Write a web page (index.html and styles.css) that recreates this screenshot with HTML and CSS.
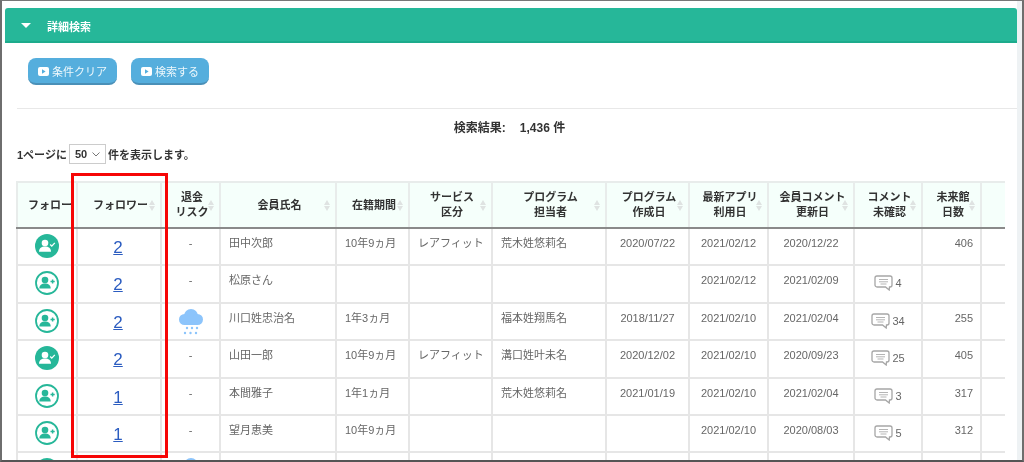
FILE: index.html
```html
<!DOCTYPE html>
<html lang="ja">
<head>
<meta charset="utf-8">
<title>詳細検索</title>
<link rel="stylesheet" href="styles.css">
</head>
<body>
<svg class="defs" width="0" height="0" aria-hidden="true">
  <symbol id="i-followed" viewBox="0 0 24 24">
    <circle cx="12" cy="12" r="12" fill="#26b799"/>
    <circle cx="10" cy="9" r="3.300" fill="#fff"/>
    <path d="M4 17.800c0-3.500 2.500-5.300 6-5.300s6 1.800 6 5.300z" fill="#fff"/>
    <path d="M15.200 10.500l1.600 1.600 3-3.200" fill="none" stroke="#fff" stroke-width="1.300"/>
  </symbol>
  <symbol id="i-follow" viewBox="0 0 24 24">
    <circle cx="12" cy="12" r="11" fill="#fff" stroke="#26b799" stroke-width="1.800"/>
    <circle cx="10" cy="9" r="3.300" fill="#26b799"/>
    <path d="M4.300 17.500c0-3.300 2.400-5 5.700-5s5.700 1.700 5.700 5z" fill="#26b799"/>
    <path d="M15.500 10.500h4.200M17.600 8.400v4.200" fill="none" stroke="#26b799" stroke-width="1.500"/>
  </symbol>
  <symbol id="i-cloud" viewBox="0 0 26 26">
    <g fill="#8cc4fb">
      <circle cx="13" cy="7" r="7"/>
      <circle cx="6.500" cy="10.500" r="5.500"/>
      <circle cx="19.500" cy="10.500" r="5.500"/>
      <rect x="6.500" y="8" width="13" height="8"/>
      <circle cx="9" cy="19" r="1.200"/><circle cx="14" cy="19" r="1.200"/><circle cx="19" cy="19" r="1.200"/>
      <circle cx="7" cy="24" r="1.200"/><circle cx="12.500" cy="24" r="1.200"/><circle cx="18" cy="24" r="1.200"/>
    </g>
  </symbol>
  <symbol id="i-comment" viewBox="0 0 19 16">
    <path d="M3 1h13a2 2 0 0 1 2 2v7a2 2 0 0 1-2 2h-.5l-.3 3-3.700-3H3a2 2 0 0 1-2-2V3a2 2 0 0 1 2-2z" fill="none" stroke="#a6a6a6" stroke-width="1.300"/>
    <path d="M5 4.500h9M5 6.800h9M6.500 9h6" stroke="#b5b5b5" stroke-width="1"/>
  </symbol>
  <symbol id="i-play" viewBox="0 0 11 9">
    <rect width="11" height="9" rx="2" fill="#fff"/>
    <path d="M4 2.200v4.600l3.600-2.300z" fill="#55aedd"/>
  </symbol>
</svg>

<div class="frame">
  <main class="content">
    <section class="panel">
      <span class="caret"></span>
      <h2 class="panel-title">詳細検索</h2>
    </section>

    <div class="actions">
      <button class="btn" type="button"><svg class="btn-icon"><use href="#i-play"/></svg>条件クリア</button>
      <button class="btn" type="button"><svg class="btn-icon"><use href="#i-play"/></svg>検索する</button>
    </div>

    <hr class="rule">

    <p class="result">検索結果:<span class="result-num">1,436 件</span></p>

    <div class="page-size">
      <span>1ページに</span>
      <span class="select">50<svg class="chev" viewBox="0 0 8 5"><path d="M.5.500 4 4 7.500.500" fill="none" stroke="#777"/></svg></span>
      <span>件を表示します。</span>
    </div>

    <table class="grid">
      <colgroup>
        <col class="c1"><col class="c2"><col class="c3"><col class="c4"><col class="c5"><col class="c6"><col class="c7"><col class="c8"><col class="c9"><col class="c10"><col class="c11"><col class="c12"><col class="c13">
      </colgroup>
      <thead>
        <tr>
          <th class="th-first">フォロー</th>
          <th>フォロワー<i class="sort"></i></th>
          <th>退会<br>リスク<i class="sort"></i></th>
          <th>会員氏名<i class="sort"></i></th>
          <th>在籍期間<i class="sort"></i></th>
          <th>サービス<br>区分<i class="sort"></i></th>
          <th>プログラム<br>担当者<i class="sort"></i></th>
          <th>プログラム<br>作成日<i class="sort"></i></th>
          <th>最新アプリ<br>利用日<i class="sort"></i></th>
          <th>会員コメント<br>更新日<i class="sort"></i></th>
          <th>コメント<br>未確認<i class="sort"></i></th>
          <th>未来館<br>日数<i class="sort"></i></th>
          <th></th>
        </tr>
      </thead>
      <tbody>
        <tr>
          <td class="mid"><svg class="follow"><use href="#i-followed"/></svg></td>
          <td class="mid"><a class="count" href="#">2</a></td>
          <td class="ctr">-</td>
          <td>田中次郎</td><td>10年9ヵ月</td><td>レアフィット</td><td>荒木姓悠莉名</td>
          <td class="ctr">2020/07/22</td><td class="ctr">2021/02/12</td><td class="ctr">2020/12/22</td>
          <td class="mid"></td><td class="num">406</td><td></td>
        </tr>
        <tr>
          <td class="mid"><svg class="follow"><use href="#i-follow"/></svg></td>
          <td class="mid"><a class="count" href="#">2</a></td>
          <td class="ctr">-</td>
          <td>松原さん</td><td></td><td></td><td></td>
          <td class="ctr"></td><td class="ctr">2021/02/12</td><td class="ctr">2021/02/09</td>
          <td class="mid"><span class="cmt"><svg class="cmt-icon"><use href="#i-comment"/></svg>4</span></td><td class="num"></td><td></td>
        </tr>
        <tr>
          <td class="mid"><svg class="follow"><use href="#i-follow"/></svg></td>
          <td class="mid"><a class="count" href="#">2</a></td>
          <td class="mid"><svg class="cloud"><use href="#i-cloud"/></svg></td>
          <td>川口姓忠治名</td><td>1年3ヵ月</td><td></td><td>福本姓翔馬名</td>
          <td class="ctr">2018/11/27</td><td class="ctr">2021/02/10</td><td class="ctr">2021/02/04</td>
          <td class="mid"><span class="cmt"><svg class="cmt-icon"><use href="#i-comment"/></svg>34</span></td><td class="num">255</td><td></td>
        </tr>
        <tr>
          <td class="mid"><svg class="follow"><use href="#i-followed"/></svg></td>
          <td class="mid"><a class="count" href="#">2</a></td>
          <td class="ctr">-</td>
          <td>山田一郎</td><td>10年9ヵ月</td><td>レアフィット</td><td>溝口姓叶未名</td>
          <td class="ctr">2020/12/02</td><td class="ctr">2021/02/10</td><td class="ctr">2020/09/23</td>
          <td class="mid"><span class="cmt"><svg class="cmt-icon"><use href="#i-comment"/></svg>25</span></td><td class="num">405</td><td></td>
        </tr>
        <tr>
          <td class="mid"><svg class="follow"><use href="#i-follow"/></svg></td>
          <td class="mid"><a class="count" href="#">1</a></td>
          <td class="ctr">-</td>
          <td>本間雅子</td><td>1年1ヵ月</td><td></td><td>荒木姓悠莉名</td>
          <td class="ctr">2021/01/19</td><td class="ctr">2021/02/10</td><td class="ctr">2021/02/04</td>
          <td class="mid"><span class="cmt"><svg class="cmt-icon"><use href="#i-comment"/></svg>3</span></td><td class="num">317</td><td></td>
        </tr>
        <tr>
          <td class="mid"><svg class="follow"><use href="#i-follow"/></svg></td>
          <td class="mid"><a class="count" href="#">1</a></td>
          <td class="ctr">-</td>
          <td>望月恵美</td><td>10年9ヵ月</td><td></td><td></td>
          <td class="ctr"></td><td class="ctr">2021/02/10</td><td class="ctr">2020/08/03</td>
          <td class="mid"><span class="cmt"><svg class="cmt-icon"><use href="#i-comment"/></svg>5</span></td><td class="num">312</td><td></td>
        </tr>
        <tr>
          <td class="mid"><svg class="follow"><use href="#i-followed"/></svg></td>
          <td class="mid"></td>
          <td class="mid"><svg class="cloud"><use href="#i-cloud"/></svg></td>
          <td></td><td></td><td></td><td></td><td></td><td></td><td></td><td></td><td></td><td></td>
        </tr>
      </tbody>
    </table>
  </main>
  <div class="gutter"></div>
  <div class="highlight"></div>
</div>
</body>
</html>
```

FILE: styles.css
```css
* { box-sizing: border-box; }

html, body {
  margin: 0;
  background: #fff;
}

.defs { position: absolute; }

.frame {
  position: relative;
  display: flex;
  width: 1024px;
  height: 462px;
  overflow: hidden;
  border-top: 1px solid #777;
  border-left: 2px solid #6e6e6e;
  border-right: 2px solid #6e6e6e;
  border-bottom: 2px solid #555;
  background: #fff;
  color: #666;
  font-family: "Liberation Sans", "Noto Sans CJK JP", sans-serif;
  font-size: 11px;
  filter: blur(0.5px);
}

.content {
  flex: 1;
  min-width: 0;
  overflow: hidden;
}

.gutter {
  width: 5px;
  background: #eef2f4;
}

.panel {
  display: flex;
  align-items: center;
  height: 35px;
  margin: 7px 0 0 3px;
  padding: 2px 0 0 16px;
  background: #26b799;
  border-bottom: 2px solid #1cab8c;
  border-radius: 3px 3px 0 0;
}

.caret {
  width: 0;
  height: 0;
  border-style: solid;
  border-width: 5px 5px 0;
  border-color: #fff transparent transparent;
}

.panel-title {
  margin: 0 0 0 16px;
  color: #fff;
  font-size: 11px;
  font-weight: 700;
}

.actions {
  display: flex;
  gap: 14px;
  margin: 15px 0 0 26px;
}

.btn {
  display: flex;
  align-items: center;
  gap: 3px;
  height: 27px;
  padding: 0 10px;
  border: 0;
  border-bottom: 2px solid #4a90b8;
  border-radius: 8px;
  background: #55aedd;
  color: #eef8fc;
  font: inherit;
}

.btn-icon {
  width: 11px;
  height: 9px;
  margin-top: 1px;
}

.rule {
  height: 1px;
  margin: 23px 0 0 15px;
  border: 0;
  background: #e8e8e8;
}

.result {
  margin: 11px 0 0;
  color: #333;
  font-size: 12px;
  font-weight: 700;
  line-height: 16px;
  text-align: center;
}

.result-num { margin-left: 14px; }

.page-size {
  display: flex;
  align-items: center;
  gap: 2px;
  height: 20px;
  margin: 8px 0 0 15px;
  color: #333;
  font-weight: 700;
  font-size: 11px;
}

.select {
  display: flex;
  align-items: center;
  justify-content: space-between;
  width: 37px;
  height: 20px;
  padding: 0 5px;
  border: 1px solid #ccc;
  background: #fff;
}

.chev {
  width: 8px;
  height: 5px;
}

.grid {
  width: 988px;
  margin: 17px 0 0 14px;
  border-collapse: collapse;
  table-layout: fixed;
}

.c1 { width: 60px; }
.c2 { width: 84px; }
.c3 { width: 59px; }
.c4 { width: 116px; }
.c5 { width: 73px; }
.c6 { width: 83px; }
.c7 { width: 114px; }
.c8 { width: 83px; }
.c9 { width: 79px; }
.c10 { width: 86px; }
.c11 { width: 68px; }
.c12 { width: 59px; }
.c13 { width: 24px; }

.grid th {
  position: relative;
  height: 46px;
  padding: 0 0 0 3px;
  border: 2px solid #e8eceb;
  border-bottom: 2px solid #8a8a8a;
  background: #f5fffb;
  color: #333;
  font-size: 11px;
  font-weight: 700;
  line-height: 15px;
  text-align: center;
  white-space: nowrap;
}

.grid th.th-first {
  padding-left: 10px;
  overflow: hidden;
  text-align: left;
}

.grid th:last-child,
.grid td:last-child { border-right: 0; }

.sort {
  position: absolute;
  top: 17px;
  right: 4px;
  width: 7px;
  height: 11px;
}

.sort::before,
.sort::after {
  content: "";
  position: absolute;
  left: 0;
  width: 0;
  height: 0;
  border-style: solid;
  border-color: transparent;
}

.sort::before {
  top: 0;
  border-width: 0 3.500px 5px;
  border-bottom-color: #dfe3e2;
}

.sort::after {
  bottom: 0;
  border-width: 5px 3.500px 0;
  border-top-color: #dfe3e2;
}

.grid tbody tr { height: 37.400px; }

.grid td {
  padding: 6px 0 0 8px;
  border: 2px solid #e6e6e6;
  line-height: 16px;
  vertical-align: top;
  white-space: nowrap;
}

.grid td.ctr {
  padding-left: 0;
  text-align: center;
}

.grid td.num {
  padding: 6px 7px 0 0;
  text-align: right;
}

.grid td.mid {
  padding: 5px 0 0;
  text-align: center;
}

.follow {
  display: block;
  width: 24px;
  height: 24px;
  margin: 0 auto;
}

.cloud {
  display: block;
  width: 26px;
  height: 26px;
  margin: 0 auto;
}

.count {
  display: inline-block;
  margin: 1px 2px 0 0;
  color: #2b5cc0;
  font-size: 17px;
  line-height: 26px;
  text-decoration: underline;
}

.cmt {
  display: flex;
  align-items: center;
  justify-content: center;
  gap: 2px;
  margin-top: 4px;
  line-height: 16px;
}

.cmt-icon {
  width: 19px;
  height: 16px;
}

.highlight {
  position: absolute;
  top: 172px;
  left: 69px;
  width: 97px;
  height: 285px;
  border: 3px solid #f60606;
}
```
